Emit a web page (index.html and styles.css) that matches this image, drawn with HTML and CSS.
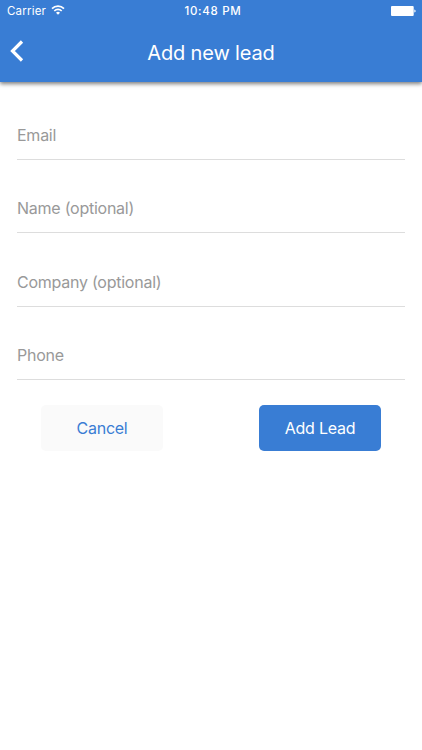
FILE: index.html
```html
<!DOCTYPE html>
<html lang="en">
<head>
    <meta charset="UTF-8">
    <meta name="viewport" content="width=device-width, initial-scale=1.0">
    <title>Add new lead</title>
    <link rel="stylesheet" href="styles.css">
</head>
<body>
    <header class="header">
        <div class="status-bar">
            <div class="carrier">
                <span class="carrier-name">Carrier</span>
                <svg class="wifi" width="14" height="10" viewBox="0 0 14 10" fill="none" stroke="#fff" stroke-width="1.7">
                    <path d="M1 3.7a8.5 8.5 0 0 1 12 0"/>
                    <path d="M3.3 6a5.2 5.2 0 0 1 7.4 0"/>
                    <path d="M7 9.8L5 7.8a2.8 2.8 0 0 1 4 0z" fill="#fff" stroke="none"/>
                </svg>
            </div>
            <span class="time">10:48 PM</span>
            <svg class="battery" width="25" height="10" viewBox="0 0 25 10" fill="#fff">
                <rect width="22.7" height="10" rx="1"/>
                <path d="M23.3 3.4c1.8.5 1.8 2.7 0 3.2z"/>
            </svg>
        </div>
        <div class="nav-bar">
            <button class="back" aria-label="Back">
                <svg width="14" height="22" viewBox="0 0 14 22" fill="none" stroke="#fff" stroke-width="3.2">
                    <path d="M12 1.5L2.5 11l9.5 9.5"/>
                </svg>
            </button>
            <h1>Add new lead</h1>
        </div>
    </header>
    <form class="lead-form">
        <input class="field" type="email" placeholder="Email">
        <input class="field" type="text" placeholder="Name (optional)">
        <input class="field" type="text" placeholder="Company (optional)">
        <input class="field" type="tel" placeholder="Phone">
        <div class="actions">
            <button class="btn btn-cancel" type="button">Cancel</button>
            <button class="btn btn-add" type="button">Add Lead</button>
        </div>
    </form>
</body>
</html>
```
FILE: styles.css
```css
* {
    box-sizing: border-box;
}
body {
    margin: 0;
    min-height: 750px;
    font-family: Inter, 'Liberation Sans', sans-serif;
    background-color: #fff;
}
.header {
    height: 82px;
    color: #fff;
    background-color: #397dd4;
    box-shadow: 0 2px 4px rgba(0,0,0,0.5);
}
.status-bar {
    display: grid;
    grid-template-columns: 1fr auto 1fr;
    align-items: center;
    height: 22px;
    padding: 0 6px 0 7px;
    font-size: 11.5px;
}
.carrier {
    display: flex;
    align-items: center;
    gap: 5px;
    letter-spacing: 0.2px;
}
.wifi {
    margin-bottom: 2px;
}
.time {
    padding-left: 3px;
    font-weight: 550;
    letter-spacing: 0.7px;
}
.battery {
    justify-self: end;
}
.nav-bar {
    display: grid;
    grid-template-columns: 40px 1fr 40px;
    align-items: center;
    height: 61px;
}
.back {
    display: flex;
    padding: 0 0 4px 10px;
    border: none;
    background: none;
}
h1 {
    margin: 0;
    font-size: 20px;
    font-weight: 400;
    letter-spacing: -0.15px;
    text-align: center;
}
.lead-form {
    padding: 30px 17px 0;
}
.field {
    display: block;
    width: 100%;
    height: 48px;
    margin-bottom: 25.3px;
    padding: 0 0 1px;
    border: none;
    border-bottom: 1px solid #ddd;
    font-family: inherit;
    font-size: 16px;
    letter-spacing: -0.25px;
    outline: none;
}
.field::placeholder {
    color: #999;
}
.actions {
    display: flex;
    justify-content: space-between;
    padding: 0.3px 24px 0;
}
.btn {
    width: 122px;
    height: 46px;
    border: none;
    border-radius: 5px;
    font-family: inherit;
    font-size: 16px;
    letter-spacing: -0.25px;
}
.btn-cancel {
    color: #397dd4;
    background-color: #fafafa;
}
.btn-add {
    color: #fff;
    background-color: #397dd4;
}
```
